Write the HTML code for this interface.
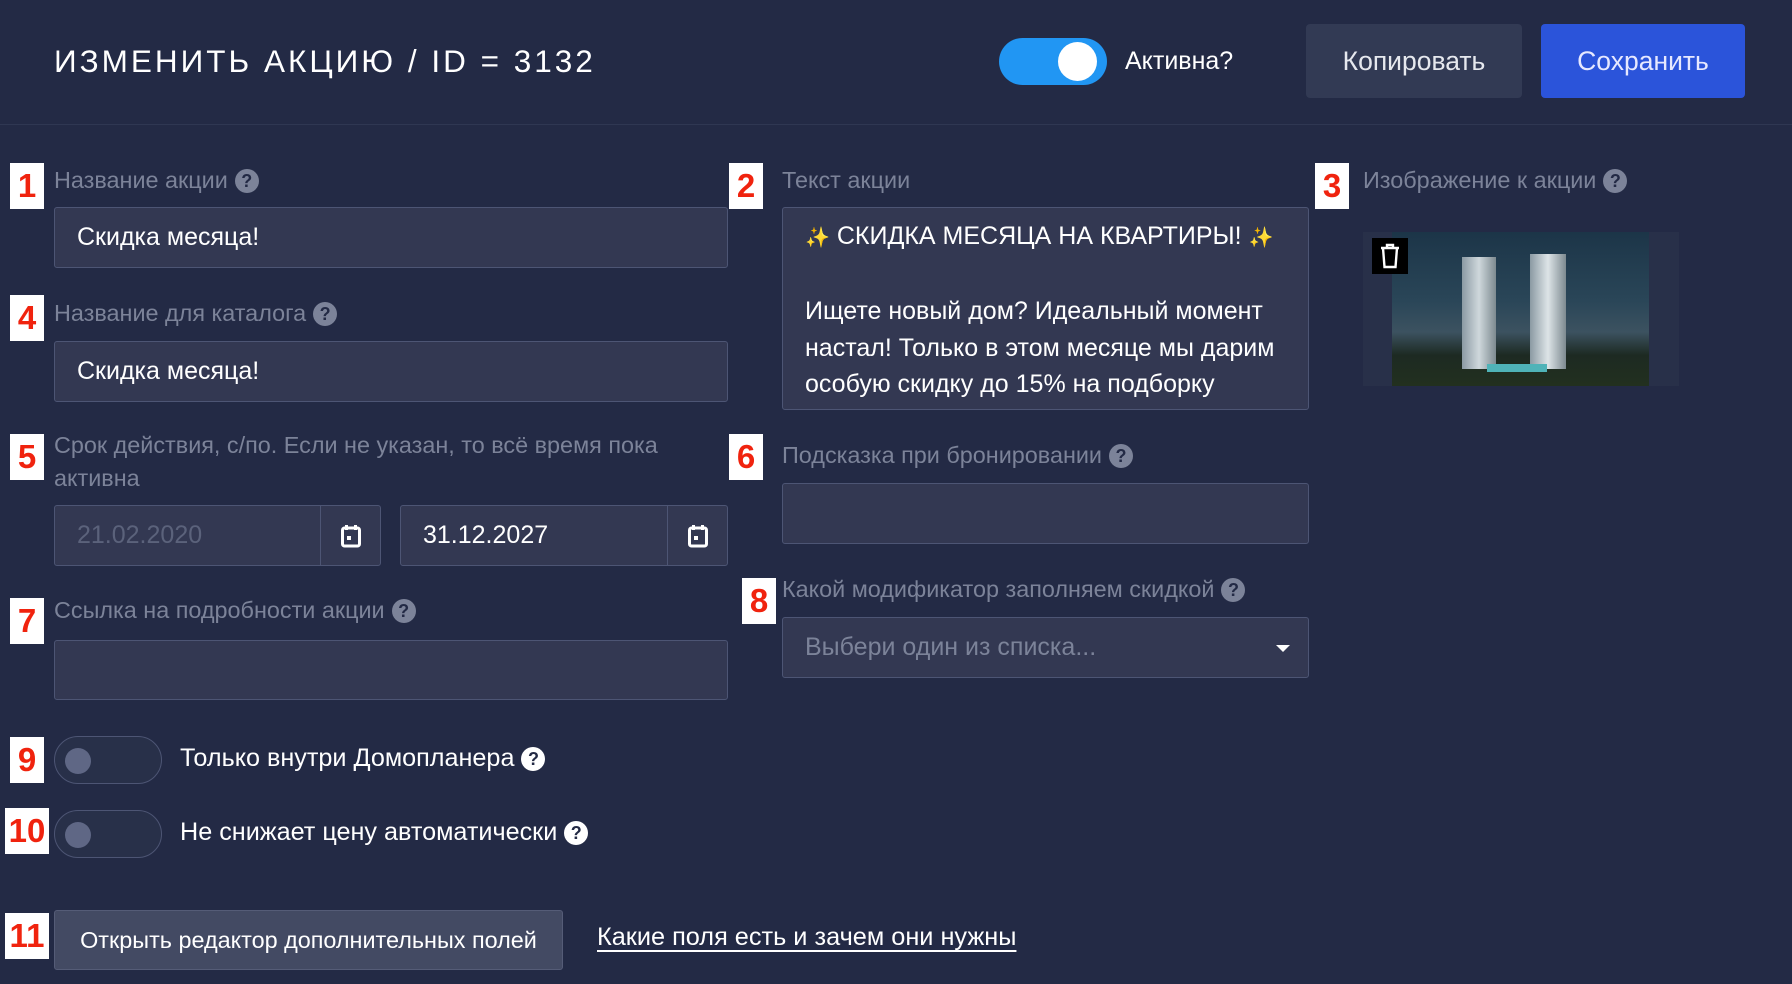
<!DOCTYPE html>
<html><head><meta charset="utf-8"><style>
*{box-sizing:border-box;margin:0;padding:0}
body{width:1792px;height:984px;background:#232a45;font-family:"Liberation Sans",sans-serif;position:relative;overflow:hidden;color:#fff}
.a{position:absolute}
.title{left:54px;top:43px;font-size:31.5px;letter-spacing:3px;color:#fff}
.sep{left:0;top:124px;width:1792px;height:1px;background:#2f3752}
.lbl{font-size:23.4px;color:#7c8399;white-space:nowrap}
.q{display:inline-block;width:24px;height:24px;border-radius:50%;background:#7c8399;color:#232a45;font-size:18px;font-weight:bold;text-align:center;line-height:24px;vertical-align:1px;margin-left:7px}
.qw{background:#fff}
.inp{background:#333852;border:1px solid #4d5574;border-radius:3px;font-size:25px;color:#fff;padding-left:22px;display:flex;align-items:center}
.bd{background:#fff;color:#f0230e;font-weight:bold;font-size:33px;text-align:center;line-height:46px;height:46px;width:34px}
.cal{position:absolute;right:0;top:0;width:60px;height:100%;border-left:1px solid #4d5574;display:flex;align-items:center;justify-content:center}
.tg{width:108px;height:48px;border-radius:24px;border:1px solid #4d5574;background:#283049}
.tg i{position:absolute;left:10px;top:11px;width:26px;height:26px;border-radius:50%;background:#5f6785}
.tt{font-size:25.2px;color:#fff}
</style></head><body>
<div class="a title">ИЗМЕНИТЬ АКЦИЮ / ID = 3132</div>
<div class="a" style="left:999px;top:38px;width:108px;height:47px;border-radius:24px;background:#2196f3"><div class="a" style="left:59px;top:4px;width:39px;height:39px;border-radius:50%;background:#fff"></div></div>
<div class="a tt" style="left:1125px;top:47px;font-size:25px">Активна?</div>
<div class="a" style="left:1306px;top:24px;width:216px;height:74px;background:#323a54;border-radius:4px;font-size:26.5px;color:#e6e8ee;text-align:center;line-height:74px">Копировать</div>
<div class="a" style="left:1541px;top:24px;width:204px;height:74px;background:#2b54da;border-radius:4px;font-size:26.5px;color:#e6e8ff;text-align:center;line-height:74px">Сохранить</div>
<div class="a sep"></div>

<div class="a bd" style="left:10px;top:163px">1</div>
<div class="a lbl" style="left:54px;top:167px">Название акции<span class="q">?</span></div>
<div class="a inp" style="left:54px;top:207px;width:674px;height:61px">Скидка месяца!</div>

<div class="a bd" style="left:729px;top:163px">2</div>
<div class="a lbl" style="left:782px;top:167px">Текст акции</div>
<div class="a inp" style="left:782px;top:207px;width:527px;height:203px;display:block;padding-top:10px;line-height:36.5px;overflow:hidden">
<div><span style="color:#f5c518;font-size:20px">✨</span> СКИДКА МЕСЯЦА НА КВАРТИРЫ! <span style="color:#f5c518;font-size:20px">✨</span></div><div>&nbsp;</div>
<div>Ищете новый дом? Идеальный момент настал! Только в этом месяце мы дарим особую скидку до 15% на подборку квартир!</div></div>

<div class="a bd" style="left:1315px;top:163px">3</div>
<div class="a lbl" style="left:1363px;top:167px">Изображение к акции<span class="q">?</span></div>
<div class="a" style="left:1363px;top:232px;width:316px;height:154px;background:#283049"></div>
<div class="a" style="left:1392px;top:232px;width:257px;height:154px;background:linear-gradient(#1c3548 0%,#2a4658 45%,#3c5260 65%,#1d2a22 80%,#22301f 100%)">
<div class="a" style="left:70px;top:25px;width:34px;height:112px;background:linear-gradient(90deg,#8b9aa3,#cfd8dc,#7d8a90)"></div>
<div class="a" style="left:138px;top:22px;width:36px;height:115px;background:linear-gradient(90deg,#8b9aa3,#dde4e7,#7d8a90)"></div>
<div class="a" style="left:95px;top:132px;width:60px;height:8px;background:#4fb3b8"></div></div>
<div class="a" style="left:1372px;top:238px;width:36px;height:36px;background:#000;display:flex;align-items:center;justify-content:center"><svg width="22" height="26" viewBox="0 0 22 26" fill="none" stroke="#fff" stroke-width="2.4"><path d="M2 5h18M8 5V2h6v3M4 5l1.5 19h11L18 5"/></svg></div>

<div class="a bd" style="left:10px;top:295px">4</div>
<div class="a lbl" style="left:54px;top:300px">Название для каталога<span class="q">?</span></div>
<div class="a inp" style="left:54px;top:341px;width:674px;height:61px">Скидка месяца!</div>

<div class="a bd" style="left:10px;top:434px">5</div>
<div class="a lbl" style="left:54px;top:429px;line-height:33px">Срок действия, с/по. Если не указан, то всё время пока<br>активна</div>
<div class="a inp" style="left:54px;top:505px;width:327px;height:61px;color:#5b627b">21.02.2020<div class="cal"><svg width="20" height="24" viewBox="0 0 20 24"><rect x="1.5" y="4" width="17" height="18" rx="2" fill="none" stroke="#fff" stroke-width="3"/><rect x="4" y="1" width="3" height="5" fill="#fff"/><rect x="13" y="1" width="3" height="5" fill="#fff"/><rect x="6" y="12" width="4" height="4" fill="#fff"/></svg></div></div>
<div class="a inp" style="left:400px;top:505px;width:328px;height:61px">31.12.2027<div class="cal"><svg width="20" height="24" viewBox="0 0 20 24"><rect x="1.5" y="4" width="17" height="18" rx="2" fill="none" stroke="#fff" stroke-width="3"/><rect x="4" y="1" width="3" height="5" fill="#fff"/><rect x="13" y="1" width="3" height="5" fill="#fff"/><rect x="6" y="12" width="4" height="4" fill="#fff"/></svg></div></div>

<div class="a bd" style="left:729px;top:434px">6</div>
<div class="a lbl" style="left:782px;top:442px">Подсказка при бронировании<span class="q">?</span></div>
<div class="a inp" style="left:782px;top:483px;width:527px;height:61px"></div>

<div class="a bd" style="left:10px;top:598px">7</div>
<div class="a lbl" style="left:54px;top:597px">Ссылка на подробности акции<span class="q">?</span></div>
<div class="a inp" style="left:54px;top:640px;width:674px;height:60px"></div>

<div class="a bd" style="left:742px;top:578px;width:34px">8</div>
<div class="a lbl" style="left:782px;top:576px">Какой модификатор заполняем скидкой<span class="q">?</span></div>
<div class="a inp" style="left:782px;top:617px;width:527px;height:61px;color:#7c8399">Выбери один из списка...<div class="a" style="right:18px;top:27px;border-left:7px solid transparent;border-right:7px solid transparent;border-top:7px solid #fff"></div></div>

<div class="a bd" style="left:10px;top:737px">9</div>
<div class="a tg" style="left:54px;top:736px"><i></i></div>
<div class="a tt" style="left:180px;top:744px">Только внутри Домопланера<span class="q qw">?</span></div>

<div class="a bd" style="left:5px;top:808px;width:44px">10</div>
<div class="a tg" style="left:54px;top:810px"><i></i></div>
<div class="a tt" style="left:180px;top:818px">Не снижает цену автоматически<span class="q qw">?</span></div>

<div class="a bd" style="left:5px;top:913px;width:44px">11</div>
<div class="a" style="left:54px;top:910px;width:509px;height:60px;background:#434a63;border:1px solid #555c77;border-radius:3px;font-size:23.4px;color:#fff;text-align:center;line-height:58px">Открыть редактор дополнительных полей</div>
<div class="a" style="left:597px;top:923px;font-size:25.3px;color:#fff;text-decoration:underline;text-underline-offset:5px">Какие поля есть и зачем они нужны</div>
</body></html>
